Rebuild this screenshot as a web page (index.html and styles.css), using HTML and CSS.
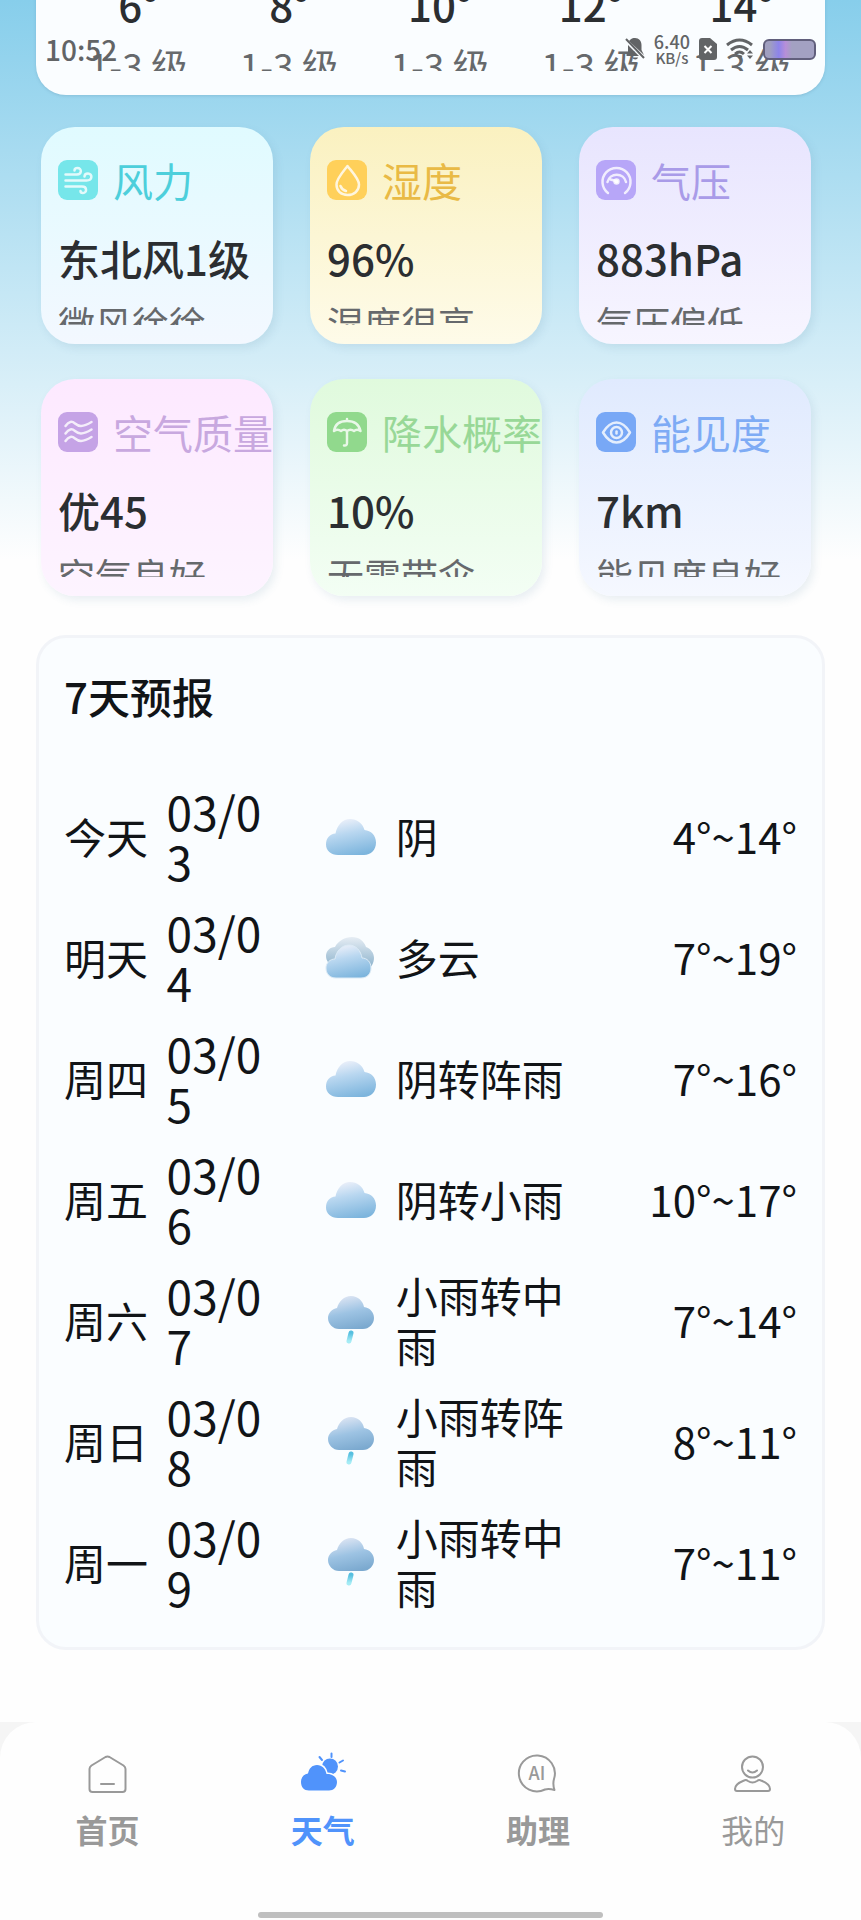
FILE: index.html
```html
<!DOCTYPE html>
<html lang="zh-CN">

<head>
  <meta charset="UTF-8">
  <meta name="viewport" content="width=device-width, initial-scale=1.0">
  <link rel="stylesheet" href="styles.css">
  <title>天气</title>
</head>

<body>
  <svg class="defs" width="0" height="0" aria-hidden="true">
    <defs>
      <linearGradient id="cloud-fill" x1="0.3" y1="0" x2="0.6" y2="1">
        <stop offset="0" stop-color="#eef1fa" />
        <stop offset="0.4" stop-color="#b9d7f0" />
        <stop offset="1" stop-color="#7db5dd" />
      </linearGradient>
      <linearGradient id="rain-fill" x1="0.3" y1="0" x2="0.6" y2="1">
        <stop offset="0" stop-color="#dfe6f4" />
        <stop offset="0.5" stop-color="#9dc3e3" />
        <stop offset="1" stop-color="#7ba9cf" />
      </linearGradient>
      <linearGradient id="drop-fill" x1="0" y1="0" x2="0" y2="1">
        <stop offset="0" stop-color="#56bfe0" />
        <stop offset="1" stop-color="#a5ecf5" />
      </linearGradient>
      <linearGradient id="back-fill" x1="0" y1="0" x2="0" y2="1">
        <stop offset="0" stop-color="#e6edf4" />
        <stop offset="1" stop-color="#85aec9" />
      </linearGradient>
      <symbol id="overcast" viewBox="0 0 60 60">
        <path fill="url(#cloud-fill)" d="M17 49C10 49 5 44.500 5 38.500C5 32 9 28 14.500 27.500C16 19 22 13 29 13C36 13 41.500 17 43.500 24C50 24.500 55 29.500 55 36.500C55 44 50 49 43 49Z" />
      </symbol>
      <symbol id="cloudy" viewBox="0 0 60 60">
        <path fill="url(#back-fill)" d="M14 38C8 38 5 34 5 29C5 24 9 20 14 20C17 14 24 10 31 10C38 10 43 14 45 20C50 22 53 26 53 31C53 36 50 41 46 43Z" />
        <path fill="url(#cloud-fill)" stroke="#dcebf6" d="M15 51C9 51 5 47 5 41C5 36 9 32 14 32C15 24 21 18 28 18C35 18 40 24 41 31C46 31 50 35 50 41C50 47 46 51 40 51Z" />
      </symbol>
      <symbol id="rain" viewBox="0 0 60 60">
        <path fill="url(#rain-fill)" d="M18 39C12 39 7 34 7 28C7 23 11 19 16 18C18 11 23 6 30 6C37 6 42 11 43 17C49 18 53 22 53 28C53 34 48 39 42 39Z" />
        <path stroke="url(#drop-fill)" stroke-width="5" stroke-linecap="round" d="M30 43L28 51" />
      </symbol>
    </defs>
  </svg>

  <header class="status-bar">
    <span class="clock">10:52</span>
    <div class="status-icons">
      <svg width="20" height="24" viewBox="0 0 20 24">
        <path fill="#626466" d="M4 4C6 1.500 8 1 10 1C14 1 16.500 4 16.500 8V13L19 18L4 4ZM3 8L14 19H1.500V17L3 15ZM7.500 20.500H13C12.500 23 8 23 7.500 20.500Z" />
        <path stroke="#626466" stroke-width="2" d="M1 2L19 21" />
      </svg>
      <div class="speed"><span>6.40</span><small>KB/s</small></div>
      <svg width="18" height="22" viewBox="0 0 18 22">
        <path fill="#626466" d="M3 0H11L18 6V19Q18 22 15 22H3Q0 22 0 19V3Q0 0 3 0Z" />
        <path stroke="#fff" stroke-width="2" d="M5.500 8L12.500 15M12.500 8L5.500 15" />
      </svg>
      <svg width="28" height="22" viewBox="0 0 28 22">
        <g fill="none" stroke="#626466" stroke-width="3">
          <path d="M1 7Q13.500 -3 26 7" />
          <path d="M5 12Q13.500 5 22 12" />
          <path d="M9 16Q13.500 12 18 16" />
        </g>
        <path fill="#626466" d="M10.500 18L13.500 21.500L16.500 18Q13.500 16 10.500 18ZM24 12L27 15.500H21ZM24 21L27 17.500H21Z" />
      </svg>
      <span class="battery"></span>
    </div>
  </header>

  <main>
    <section class="card hourly">
      <div class="hour"><span class="value">6°</span><span class="note">1-3 级</span></div>
      <div class="hour"><span class="value">8°</span><span class="note">1-3 级</span></div>
      <div class="hour"><span class="value">10°</span><span class="note">1-3 级</span></div>
      <div class="hour"><span class="value">12°</span><span class="note">1-3 级</span></div>
      <div class="hour"><span class="value">14°</span><span class="note">1-3 级</span></div>
    </section>

    <section class="metrics">
      <article class="metric wind">
        <h3>
          <svg viewBox="0 0 40 40">
            <path d="M7.500 14.500H19C24 14.500 24 8 19.500 8C17.500 8 16.500 9 16.500 10.500M7.500 20.500H28.500C35 20.500 34.500 13.500 30 13.500C28 13.500 26.500 14.500 26.500 16.500M7.500 26.500H24C29.500 26.500 29 33 25 33C23.500 33 22.500 32 22.500 31" />
          </svg>
          风力
        </h3>
        <p class="value">东北风1级</p>
        <p class="note">微风徐徐</p>
      </article>
      <article class="metric humidity">
        <h3>
          <svg viewBox="0 0 40 40">
            <path d="M20.500 6C15 13 9.500 19 9.500 24.500C9.500 31 14 35 20.500 35C27 35 32 31 32 24.500C32 19 26 13 20.500 6Z" />
            <path d="M13.500 26Q15 30 19 31" />
          </svg>
          湿度
        </h3>
        <p class="value">96%</p>
        <p class="note">湿度很高</p>
      </article>
      <article class="metric pressure">
        <h3>
          <svg viewBox="0 0 40 40">
            <path d="M12 33A14 14 0 1 1 29 33" />
            <path d="M11.500 22A9.500 9.500 0 0 1 30 22" />
            <circle cx="20.500" cy="21.500" r="2" />
            <path d="M20 21L14.500 19.500" />
          </svg>
          气压
        </h3>
        <p class="value">883hPa</p>
        <p class="note">气压偏低</p>
      </article>
      <article class="metric air">
        <h3>
          <svg viewBox="0 0 40 40">
            <path d="M7.500 14C11 9 14 9 17 11.500S24 16 33.500 10M7.500 21.500C11 16.500 14 16.500 17 19S24 23.500 33.500 17.500M7.500 29C11 24 14 24 17 26.500S24 31 33.500 25" />
          </svg>
          空气质量
        </h3>
        <p class="value">优45</p>
        <p class="note">空气良好</p>
      </article>
      <article class="metric rainfall">
        <h3>
          <svg viewBox="0 0 40 40">
            <path d="M7 19C8 12 13 9 20 9S32 12 33.500 19Q30 16.500 27 19Q23.500 16.500 20 19Q17 16.500 14 19Q10.500 16.500 7 19ZM20 9V7M20 19V31Q20 34 17 33.500" />
          </svg>
          降水概率
        </h3>
        <p class="value">10%</p>
        <p class="note">无需带伞</p>
      </article>
      <article class="metric visibility">
        <h3>
          <svg viewBox="0 0 40 40">
            <path d="M7 20.500Q13 10.500 20.500 10.500T34 20.500Q28 30.500 20.500 30.500T7 20.500Z" />
            <circle cx="20.500" cy="20.500" r="5.500" />
            <path d="M20.500 19.500V21.500" />
          </svg>
          能见度
        </h3>
        <p class="value">7km</p>
        <p class="note">能见度良好</p>
      </article>
    </section>

    <section class="card forecast">
      <h2>7天预报</h2>
      <table>
        <colgroup>
          <col class="col-day">
          <col class="col-date">
          <col class="col-icon">
          <col class="col-text">
          <col class="col-temp">
        </colgroup>
        <tbody>
          <tr>
            <td>今天</td>
            <td class="date">03/03</td>
            <td><svg><use href="#overcast" /></svg></td>
            <td class="text">阴</td>
            <td class="temp">4°~14°</td>
          </tr>
          <tr>
            <td>明天</td>
            <td class="date">03/04</td>
            <td><svg><use href="#cloudy" /></svg></td>
            <td class="text">多云</td>
            <td class="temp">7°~19°</td>
          </tr>
          <tr>
            <td>周四</td>
            <td class="date">03/05</td>
            <td><svg><use href="#overcast" /></svg></td>
            <td class="text">阴转阵雨</td>
            <td class="temp">7°~16°</td>
          </tr>
          <tr>
            <td>周五</td>
            <td class="date">03/06</td>
            <td><svg><use href="#overcast" /></svg></td>
            <td class="text">阴转小雨</td>
            <td class="temp">10°~17°</td>
          </tr>
          <tr>
            <td>周六</td>
            <td class="date">03/07</td>
            <td><svg><use href="#rain" /></svg></td>
            <td class="text">小雨转中雨</td>
            <td class="temp">7°~14°</td>
          </tr>
          <tr>
            <td>周日</td>
            <td class="date">03/08</td>
            <td><svg><use href="#rain" /></svg></td>
            <td class="text">小雨转阵雨</td>
            <td class="temp">8°~11°</td>
          </tr>
          <tr>
            <td>周一</td>
            <td class="date">03/09</td>
            <td><svg><use href="#rain" /></svg></td>
            <td class="text">小雨转中雨</td>
            <td class="temp">7°~11°</td>
          </tr>
        </tbody>
      </table>
    </section>
  </main>

  <div class="tab-area">
    <nav class="tab-bar">
      <a href="#home" class="tab bold">
        <svg viewBox="0 0 48 48">
          <path d="M21.500 7Q23.500 6 25.500 7L39.500 15.500Q41.500 17 41.500 19V39Q41.500 42 38.500 42H8.500Q5.500 42 5.500 39V19Q5.500 17 7.500 15.500ZM17 34H30" />
        </svg>
        首页
      </a>
      <a href="#weather" class="tab bold active">
        <svg viewBox="0 0 48 48">
          <circle class="solid" cx="31" cy="16.500" r="8" />
          <path class="solid edge" d="M10 40.500C5 40.500 2 37 2 32C2 27 5 24 9 23.500C10 18.500 13 15 18 15C23 15 26.500 18.500 27.500 24C33 23.500 38 27 38 32C38 37 34.500 40.500 30 40.500Z" />
          <path d="M20.500 7L23 10M32.500 3.500V7M40.500 12.500L44 10.500M42 20.500L46 21.500" />
        </svg>
        天气
      </a>
      <a href="#assistant" class="tab bold">
        <svg viewBox="0 0 48 48">
          <path d="M31 39.500A18 18 0 1 1 40 29Q38.500 34 40.500 40Q35 38.500 31 39.500Z" />
          <text x="23" y="30" text-anchor="middle">AI</text>
        </svg>
        助理
      </a>
      <a href="#mine" class="tab">
        <svg viewBox="0 0 48 48">
          <circle cx="23.500" cy="17" r="10.500" />
          <path d="M19 20.500Q23.500 24.500 28 20.500M15 30.500Q17 29.500 19 31Q23.500 34 28 31Q30 29.500 32 30.500C37 32.500 41 35 41 39Q41 41 39 41H8Q6 41 6 39C6 35 10 32.500 15 30.500Z" />
        </svg>
        我的
      </a>
    </nav>
    <div class="home-indicator"></div>
  </div>
</body>

</html>
```

FILE: styles.css
```css
* {
  box-sizing: border-box;
}

body {
  margin: 0;
  font-family: 'Noto Sans CJK SC', sans-serif;
  color: #111417;
  background: linear-gradient(180deg, #87ceeb 0, #fefefe 560px);
}

h2,
h3,
p {
  margin: 0;
}

.defs {
  position: absolute;
}

/* system bar floats over the scrolled page */
.status-bar {
  position: absolute;
  top: 0;
  left: 0;
  right: 0;
  z-index: 2;
  display: flex;
  justify-content: space-between;
  align-items: center;
  padding: 30px 45px 0;
  color: #626466;
}

.clock {
  font-size: 28px;
  font-weight: 500;
  line-height: 38px;
}

.status-icons {
  display: flex;
  align-items: center;
  gap: 9px;
}

.speed {
  display: flex;
  flex-direction: column;
  align-items: center;
  font-size: 18px;
  font-weight: 500;
  line-height: 18px;
}

.speed small {
  font-size: 15px;
  line-height: 16px;
}

.battery {
  width: 53px;
  height: 21px;
  border: 2px solid #615f7c;
  border-radius: 6px;
  background: linear-gradient(90deg, #a09fc0 10%, #8d84ea 28%, #b78fd8 42%, #a3a1c2 55%);
}

/* shared text */
.value {
  font-size: 42px;
  font-weight: 500;
  line-height: 60px;
  color: #2b2e31;
  white-space: nowrap;
}

.note {
  height: 25px;
  margin-top: 12px;
  font-size: 37px;
  line-height: 46px;
  color: #66696c;
  white-space: nowrap;
  overflow: hidden;
}

.card {
  margin: 0 36px;
  border-radius: 30px;
  background: #fafdff;
}

/* hourly strip, scrolled half out of view */
.hourly {
  display: flex;
  margin-top: -66px;
  padding: 40px 8px 24px 27px;
  box-shadow: 0 1px 3px rgba(90, 140, 170, 0.3);
}

.hour {
  flex: 1;
  display: flex;
  flex-direction: column;
  align-items: center;
}

.hour .note {
  line-height: 38px;
}

/* metric cards */
.metrics {
  display: grid;
  grid-template-columns: repeat(3, 1fr);
  gap: 35px 37px;
  padding: 32px 50px 39px 41px;
}

.metric {
  min-width: 0;
  padding: 33px 0 19px 17px;
  border-radius: 34px;
  box-shadow: 3px 4px 9px rgba(70, 120, 160, 0.12);
}

.metric h3 {
  display: flex;
  align-items: center;
  gap: 15px;
  height: 40px;
  margin-bottom: 28px;
  font-size: 40px;
  font-weight: 400;
  white-space: nowrap;
}

.metric h3 svg {
  flex: none;
  width: 40px;
  height: 40px;
  border-radius: 9px;
  fill: none;
  stroke: #fff;
  stroke-opacity: 0.8;
  stroke-width: 2.5;
  stroke-linecap: round;
  stroke-linejoin: round;
}

.wind {
  background: linear-gradient(#e0fbff, #f3f8ff);
}

.wind h3 {
  color: #4dcfdb;
}

.wind svg {
  background: #76e6ea;
}

.humidity {
  background: linear-gradient(#faf1c0, #fefbe9);
}

.humidity h3 {
  color: #e9ba45;
}

.humidity svg {
  background: #ffd05a;
}

.pressure {
  background: linear-gradient(#e8e5fe, #f7f5ff);
}

.pressure h3 {
  color: #a99be8;
}

.pressure svg {
  background: #b7a6f8;
}

.pressure circle {
  fill: #fff;
}

.air {
  background: linear-gradient(#fde9ff, #fdf4ff);
}

.air h3 {
  color: #c8a8df;
}

.air svg {
  background: #c5a3e6;
}

.rainfall {
  background: linear-gradient(#e0fadd, #f3fef4);
}

.rainfall h3 {
  color: #98d897;
}

.rainfall svg {
  background: #91d98d;
}

.visibility {
  background: linear-gradient(#e0eafe, #f5f8ff);
}

.visibility h3 {
  color: #7eabf5;
}

.visibility svg {
  background: #78a8f6;
}

/* 7 day forecast */
.forecast {
  padding: 28px 25px 25px;
  border: 3px solid #f2f4f8;
}

.forecast h2 {
  margin-bottom: 49px;
  font-size: 42px;
  font-weight: 500;
  line-height: 60px;
}

.forecast table {
  width: 100%;
  table-layout: fixed;
  border-collapse: collapse;
  font-size: 42px;
  line-height: 50px;
}

.forecast tr {
  height: 121px;
}

.forecast td {
  padding: 0;
  vertical-align: middle;
}

.forecast td svg {
  display: block;
  width: 60px;
  height: 60px;
}

.col-day {
  width: 14%;
}

.col-date {
  width: 21%;
}

.col-icon {
  width: 10%;
}

.col-text {
  width: 27%;
}

.forecast .date {
  padding-right: 48px;
  font-size: 46px;
  word-break: break-all;
}

.forecast .text {
  padding-left: 2px;
  padding-right: 10px;
}

.forecast .temp {
  text-align: right;
  white-space: nowrap;
}

/* bottom tabs */
.tab-area {
  margin-top: 72px;
  padding-bottom: 2px;
  background: linear-gradient(#f5f5f5 0, #f5f5f5 36px, #fefefe 36px);
}

.tab-bar {
  display: flex;
  padding: 28px 0 63px;
  border-radius: 36px 36px 0 0;
  background: #fefefe;
}

.tab {
  flex: 1;
  display: flex;
  flex-direction: column;
  align-items: center;
  gap: 11px;
  font-size: 32px;
  line-height: 40px;
  color: #999;
  text-decoration: none;
}

.tab.bold {
  font-weight: 700;
}

.tab.active {
  color: #5093fb;
}

.tab svg {
  width: 48px;
  height: 48px;
  fill: none;
  stroke: currentColor;
  stroke-width: 2;
  stroke-linecap: round;
  stroke-linejoin: round;
}

.tab .solid {
  fill: currentColor;
  stroke: none;
}

.tab .edge {
  stroke: #fefefe;
  stroke-width: 3;
  paint-order: stroke;
}

.tab text {
  font-size: 18px;
  font-weight: 500;
  fill: currentColor;
  stroke: none;
}

.home-indicator {
  width: 40%;
  height: 6px;
  margin: 0 auto;
  border-radius: 3px;
  background: #bfbfbf;
}
```
